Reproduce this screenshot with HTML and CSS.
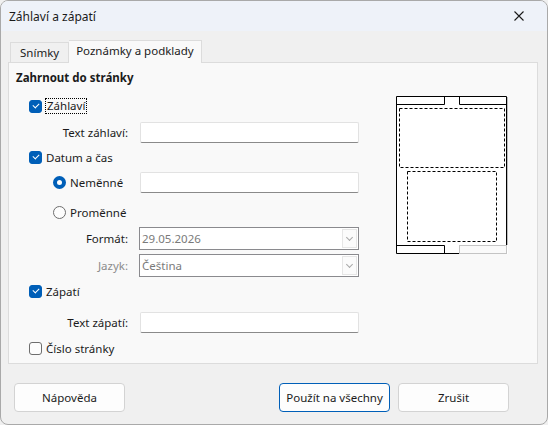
FILE: index.html
```html
<!DOCTYPE html>
<html lang="cs">
<head>
  <meta charset="UTF-8">
  <title>Záhlaví a zápatí</title>
  <link rel="stylesheet" href="styles.css">
</head>
<body>
  <div class="dialog">
    <div class="titlebar">
      <span class="title">Záhlaví a zápatí</span>
      <svg class="close" width="12" height="12" viewBox="0 0 12 12">
        <path d="M1.5 1.5 L10.5 10.5 M10.5 1.5 L1.5 10.5" stroke="#1a1a1a" stroke-width="1.1" fill="none"/>
      </svg>
    </div>

    <div class="content">
      <div class="tabs">
        <div class="tab">Snímky</div>
        <div class="tab active">Poznámky a podklady</div>
      </div>

      <div class="panel">
        <div class="form">
          <div class="heading">Zahrnout do stránky</div>

          <div class="row r-zahlavi">
            <span class="check on"></span>
            <span class="focus">Záhlaví</span>
          </div>

          <div class="row field r-text1">
            <label class="lbl">Text záhlaví:</label>
            <div class="input"></div>
          </div>

          <div class="row r-datum">
            <span class="check on"></span>
            <span>Datum a čas</span>
          </div>

          <div class="row sub r-nemenne">
            <span class="radio on"></span>
            <span class="radio-text">Neměnné</span>
            <div class="input"></div>
          </div>

          <div class="row sub r-promenne">
            <span class="radio"></span>
            <span class="radio-text">Proměnné</span>
          </div>

          <div class="row field r-format">
            <label class="lbl">Formát:</label>
            <div class="select"><span>29.05.2026</span><i class="drop"></i></div>
          </div>

          <div class="row field r-jazyk">
            <label class="lbl muted">Jazyk:</label>
            <div class="select"><span>Čeština</span><i class="drop"></i></div>
          </div>

          <div class="row r-zapati">
            <span class="check on"></span>
            <span>Zápatí</span>
          </div>

          <div class="row field r-text2">
            <label class="lbl">Text zápatí:</label>
            <div class="input"></div>
          </div>

          <div class="row r-cislo">
            <span class="check"></span>
            <span>Číslo stránky</span>
          </div>
        </div>

        <!-- náhled rozvržení stránky -->
        <svg class="preview" width="113" height="158" viewBox="0 0 113 158">
          <rect x="0" y="0" width="112" height="158" fill="#fff"/>
          <path d="M111.5 1 V149" stroke="#bdbdbd" stroke-width="1"/>
          <path d="M0.5 157.5 V0.5 H110.5 V149.5 M0.5 157.5 H63.5" stroke="#000" stroke-width="1" fill="none"/>
          <path d="M0.5 8.5 H48.5 V0.5 M63.5 0.5 V8.5 H110.5" stroke="#000" fill="none"/>
          <path d="M0.5 149.5 H48.5 V157.5" stroke="#000" fill="none"/>
          <rect x="63.5" y="149.5" width="47" height="8" fill="#fafafa" stroke="#c4c4c4"/>
          <rect x="3.5" y="12.5" width="105" height="59" fill="none" stroke="#000" stroke-dasharray="3 2"/>
          <rect x="11.5" y="75.5" width="89" height="70" fill="none" stroke="#000" stroke-dasharray="3 2"/>
        </svg>
      </div>
    </div>

    <div class="buttons">
      <button class="btn">Nápověda</button>
      <span class="spacer"></span>
      <button class="btn default">Použít na všechny</button>
      <button class="btn">Zrušit</button>
    </div>
  </div>
</body>
</html>
```

FILE: styles.css
```css
/* Dialog okno */
body {
  margin: 0;
  font-family: "Noto Sans", "Open Sans", sans-serif;
  font-size: 11.5px;
  color: #1b1b1b;
  background: #f0f0f0;
}

.dialog {
  width: 548px;
  height: 425px;
  box-sizing: border-box;
  border: 1px solid #a9a9a9;
  border-radius: 8px;
  background: #f0f0f0;
  overflow: hidden;
}

.titlebar {
  height: 30px;
  display: flex;
  align-items: center;
  justify-content: space-between;
  padding: 0 22px 0 8px;
  background: #eef2f9;
}

.title {
  font-size: 12px;
}

/* Záložky */
.content {
  padding: 9px 9px 0 7px;
}

.tabs {
  display: flex;
  align-items: flex-end;
  height: 22px;
  padding-left: 2px;
}

.tab {
  height: 20px;
  line-height: 20px;
  padding: 0 9px;
  border: 1px solid #dcdcdc;
  border-bottom: none;
  background: #f0f0f0;
  box-sizing: border-box;
}

.tab.active {
  height: 23px;
  line-height: 20px;
  padding: 0 7px;
  background: #f9f9f9;
  position: relative;
  top: 1px;
  border-left: none;
}

.panel {
  height: 302px;
  box-sizing: border-box;
  border: 1px solid #dcdcdc;
  background: #f9f9f9;
  display: flex;
}

/* Formulář */
.form {
  width: 351px;
  flex: none;
  padding-top: 5px;
}

.heading {
  height: 20px;
  line-height: 20px;
  padding-left: 7px;
  font-weight: bold;
}

.row {
  display: flex;
  align-items: center;
  height: 20px;
  padding-left: 20px;
  white-space: nowrap;
}

.row.field {
  padding-left: 0;
  height: 22px;
}

.row.sub {
  padding-left: 44px;
}

.r-zahlavi { margin-top: 8px; }
.r-text1 { margin-top: 5px; }
.r-datum { margin-top: 4px; }
.r-nemenne { margin-top: 5px; height: 21px; }
.r-promenne { margin-top: 9px; }
.r-format { margin-top: 5px; height: 23px; }
.r-jazyk { margin-top: 5px; height: 23px; }
.r-zapati { margin-top: 5px; }
.r-text2 { margin-top: 10px; }
.r-cislo { margin-top: 5px; }

.check {
  width: 13px;
  height: 13px;
  box-sizing: border-box;
  border: 1px solid #6e6e6e;
  border-radius: 3px;
  background: #fdfdfd;
  margin-right: 4px;
  position: relative;
  flex: none;
}

.check.on {
  border-color: #005fb8;
  background: #005fb8;
}

.check.on::after {
  content: "";
  position: absolute;
  left: 3px;
  top: 2px;
  width: 5px;
  height: 3px;
  border-left: 1px solid #fff;
  border-bottom: 1px solid #fff;
  transform: rotate(-45deg);
}

.focus {
  outline: 1px dotted #000;
  outline-offset: 0;
  padding: 0 1px;
  line-height: 14px;
}

.radio {
  width: 13px;
  height: 13px;
  box-sizing: border-box;
  border: 1px solid #6e6e6e;
  border-radius: 50%;
  background: #fdfdfd;
  flex: none;
}

.radio.on {
  border: 4px solid #005fb8;
  background: #fff;
}

.radio-text {
  margin-left: 4px;
  width: 70px;
  min-width: 0;
  flex: none;
}

.lbl {
  width: 119px;
  text-align: right;
  margin-right: 12px;
  flex: none;
}

.lbl.muted {
  color: #8c8c8c;
}

.input {
  width: 219px;
  height: 21px;
  box-sizing: border-box;
  background: #fff;
  border: 1px solid #e2e2e2;
  border-bottom-color: #8a8a8a;
  border-radius: 2px;
  flex: none;
}

.select {
  width: 220px;
  height: 23px;
  box-sizing: border-box;
  border: 1px solid #8a8a8e;
  background: #fff;
  color: #7a7a7a;
  display: flex;
  align-items: center;
  justify-content: space-between;
  padding-left: 2px;
  margin-left: -1px;
}

.drop {
  width: 15px;
  height: 19px;
  margin-right: 1px;
  box-sizing: border-box;
  border: 1px solid #e6e6e6;
  background: #fbfbfb;
  position: relative;
}

.drop::after {
  content: "";
  position: absolute;
  left: 4px;
  top: 5px;
  width: 4px;
  height: 4px;
  border-right: 1px solid #a8a8a8;
  border-bottom: 1px solid #a8a8a8;
  transform: rotate(45deg);
}

.preview {
  margin-left: 36px;
  margin-top: 33px;
}

/* Tlačítka */
.buttons {
  display: flex;
  padding: 19px 0 0 13px;
}

.spacer {
  width: 146px;
}

.btn {
  width: 111px;
  height: 29px;
  margin-right: 8px;
  font-family: inherit;
  font-size: 11.5px;
  white-space: nowrap;
  color: #1b1b1b;
  background: #fdfdfd;
  border: 1px solid #d3d3d3;
  border-radius: 4px;
}

.btn.default {
  border-color: #005fb8;
}
```
